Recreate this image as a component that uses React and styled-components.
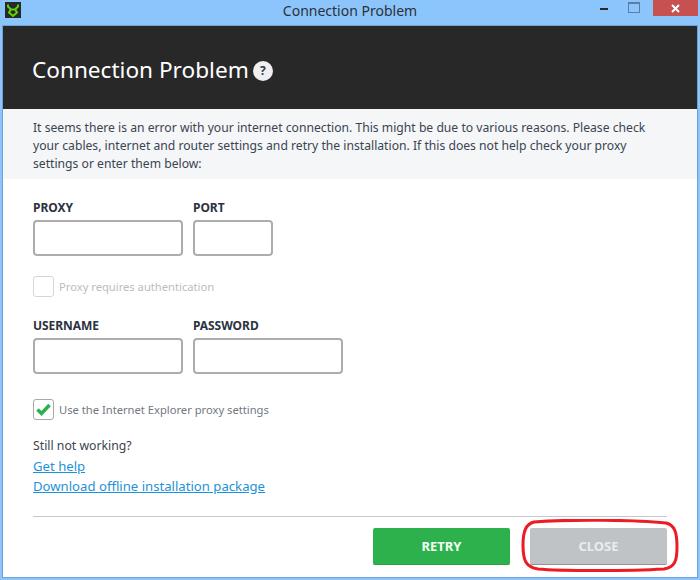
import React from 'react'
import styled, { createGlobalStyle } from 'styled-components'

const Global = createGlobalStyle`
    html, body {
        margin: 0;
        padding: 0;
        background: #8bc5fb;
    }
    * {
        box-sizing: border-box;
    }
`

const Frame = styled.div`
    position: relative;
    width: 700px;
    height: 580px;
    display: flex;
    flex-direction: column;
    background: #8bc5fb;
    font-family: 'Noto Sans', 'Open Sans', sans-serif;
    overflow: hidden;
`

const TitleBar = styled.div`
    height: 25px;
    display: flex;
    align-items: flex-start;
    justify-content: space-between;
    flex-shrink: 0;
`

const AppIcon = styled.svg`
    width: 16px;
    height: 16px;
    margin: 2px 0 0 5px;
`

const WindowTitle = styled.div`
    position: absolute;
    left: 0;
    right: 0;
    top: 2px;
    text-align: center;
    font-size: 14px;
    line-height: 18px;
    color: #2c3138;
`

const WindowButtons = styled.div`
    display: flex;
    align-items: flex-start;
    padding-right: 2px;
`

const MinButton = styled.div`
    width: 25px;
    height: 16px;
    display: flex;
    justify-content: center;
    padding-top: 8px;
    margin-right: 5px;
    &::before {
        content: '';
        width: 8px;
        height: 2px;
        background: #2a2a2a;
    }
`

const MaxButton = styled.div`
    width: 26px;
    height: 16px;
    display: flex;
    justify-content: center;
    padding-top: 2px;
    margin-right: 6px;
    &::before {
        content: '';
        width: 10px;
        height: 8px;
        border: 1px solid #5a7fa3;
        border-top-width: 2px;
    }
`

const CloseButton = styled.div`
    width: 45px;
    height: 16px;
    background: #c75050;
    color: #fff;
    display: flex;
    align-items: center;
    justify-content: center;
`

const Window = styled.div`
    flex: 1;
    margin: 1px 3px 3px;
    display: flex;
    flex-direction: column;
    background: #fff;
    outline: 1px solid #6fa3d3;
`

const Header = styled.div`
    height: 83px;
    padding: 5px 29px 0;
    display: flex;
    align-items: center;
    gap: 4px;
    background: #282828;
`

const Heading = styled.h1`
    margin: 0;
    font-size: 22.6px;
    font-weight: 400;
    color: #fff;
    line-height: 30px;
`

const HelpBadge = styled.div`
    width: 20px;
    height: 20px;
    border-radius: 50%;
    background: #f0f0f0;
    color: #2f3a4a;
    font-size: 12px;
    font-weight: 700;
    line-height: 20px;
    text-align: center;
    margin-top: 1px;
`

const Intro = styled.p`
    margin: 0;
    height: 70px;
    padding: 10px 30px 0;
    background: #f4f6f8;
    font-size: 12.17px;
    line-height: 18px;
    color: #3b4450;
    white-space: nowrap;
`

const Form = styled.div`
    flex: 1;
    padding: 22px 30px 0;
    display: flex;
    flex-direction: column;
`

const FieldRow = styled.div`
    display: flex;
    gap: 10px;
`

const Field = styled.label`
    display: flex;
    flex-direction: column;
    width: ${(p) => p.$width}px;
`

const FieldLabel = styled.span`
    font-size: 12px;
    font-weight: 700;
    line-height: 14px;
    color: #2b3340;
    margin-bottom: 5px;
    letter-spacing: -0.05px;
`

const TextBox = styled.input`
    width: 100%;
    height: 36px;
    border: 2px solid #adadad;
    border-radius: 4px;
    background: #fff;
    outline: none;
`

const CheckRow = styled.div`
    display: flex;
    align-items: center;
    gap: 5px;
    margin-top: ${(p) => p.$top}px;
    margin-bottom: ${(p) => p.$bottom || 0}px;
`

const CheckBox = styled.div`
    width: 21px;
    height: 21px;
    border: 1px solid ${(p) => (p.$muted ? '#d6d6d6' : '#a9a9a9')};
    border-radius: 3px;
    display: flex;
    align-items: center;
    justify-content: center;
    background: #fff;
`

const CheckLabel = styled.span`
    font-size: 11.2px;
    line-height: 16px;
    color: ${(p) => (p.$muted ? '#b9bdc1' : '#71787f')};
`

const HelpBlock = styled.div`
    margin-top: 16px;
    display: flex;
    flex-direction: column;
    font-size: 12.25px;
    line-height: 20px;
    color: #3b4450;
`

const HelpLink = styled.a`
    color: #1e92d8;
    font-size: 13.15px;
    text-decoration: underline;
    align-self: flex-start;
`

const Footer = styled.div`
    margin-top: 20px;
    border-top: 1px solid #c3c8cc;
    padding-top: 11px;
    display: flex;
    justify-content: flex-end;
    gap: 20px;
`

const ActionButton = styled.button`
    width: 137px;
    height: 37px;
    border: none;
    border-radius: 2px;
    border-bottom: 1px solid ${(p) => (p.$primary ? '#27a046' : '#8f9497')};
    background: ${(p) => (p.$primary ? '#2db14c' : '#bfc3c6')};
    color: ${(p) => (p.$primary ? '#f4fff6' : '#e9ecee')};
    font-family: inherit;
    font-size: 13px;
    font-weight: 700;
    padding: 0 0 1px;
`

const Annotation = styled.svg`
    position: absolute;
    left: 520px;
    top: 519px;
    width: 160px;
    height: 54px;
    pointer-events: none;
`

export default function App() {
    return (
        <Frame>
            <Global />
            <TitleBar>
                <AppIcon viewBox='0 0 16 16'>
                    <rect width='16' height='16' fill='#26292b' />
                    <path
                        d='M3 2.5v2l3 3h4l3-3v-2M5.5 8L4 10.5 8 14l4-3.5L10.500 8'
                        fill='none'
                        stroke='#5fd400'
                        strokeWidth='2'
                    />
                </AppIcon>
                <WindowTitle>Connection Problem</WindowTitle>
                <WindowButtons>
                    <MinButton />
                    <MaxButton />
                    <CloseButton>
                        <svg width='9' height='9' viewBox='0 0 9 9'>
                            <path d='M1 1l7 7M8 1L1 8' stroke='#fff' strokeWidth='2' />
                        </svg>
                    </CloseButton>
                </WindowButtons>
            </TitleBar>
            <Window>
                <Header>
                    <Heading>Connection Problem</Heading>
                    <HelpBadge>?</HelpBadge>
                </Header>
                <Intro>
                    It seems there is an error with your internet connection. This might be due to various reasons. Please check
                    <br />
                    your cables, internet and router settings and retry the installation. If this does not help check your proxy
                    <br />
                    settings or enter them below:
                </Intro>
                <Form>
                    <FieldRow>
                        <Field $width={150}>
                            <FieldLabel>PROXY</FieldLabel>
                            <TextBox />
                        </Field>
                        <Field $width={80}>
                            <FieldLabel>PORT</FieldLabel>
                            <TextBox />
                        </Field>
                    </FieldRow>
                    <CheckRow $top={20} $bottom={22}>
                        <CheckBox $muted />
                        <CheckLabel $muted>Proxy requires authentication</CheckLabel>
                    </CheckRow>
                    <FieldRow>
                        <Field $width={150}>
                            <FieldLabel>USERNAME</FieldLabel>
                            <TextBox />
                        </Field>
                        <Field $width={150}>
                            <FieldLabel>PASSWORD</FieldLabel>
                            <TextBox />
                        </Field>
                    </FieldRow>
                    <CheckRow $top={25}>
                        <CheckBox>
                            <svg width='15' height='13' viewBox='0 0 15 13'>
                                <path d='M1.5 6.500l4 4L13.500 2' fill='none' stroke='#2db14c' strokeWidth='3.5' />
                            </svg>
                        </CheckBox>
                        <CheckLabel>Use the Internet Explorer proxy settings</CheckLabel>
                    </CheckRow>
                    <HelpBlock>
                        <span>Still not working?</span>
                        <HelpLink>Get help</HelpLink>
                        <HelpLink>Download offline installation package</HelpLink>
                    </HelpBlock>
                    <Footer>
                        <ActionButton $primary>RETRY</ActionButton>
                        <ActionButton>CLOSE</ActionButton>
                    </Footer>
                </Form>
            </Window>
            <Annotation viewBox='0 0 160 54'>
                <path
                    d='M14 3C50 0 120 1 146 4C155 6 157 14 157 28C157 42 155 48 144 50C110 52 40 52 18 50C6 48 3 42 3 26C3 12 6 5 14 3Z'
                    fill='none'
                    stroke='#ed1c24'
                    strokeWidth='3'
                />
            </Annotation>
        </Frame>
    )
}
